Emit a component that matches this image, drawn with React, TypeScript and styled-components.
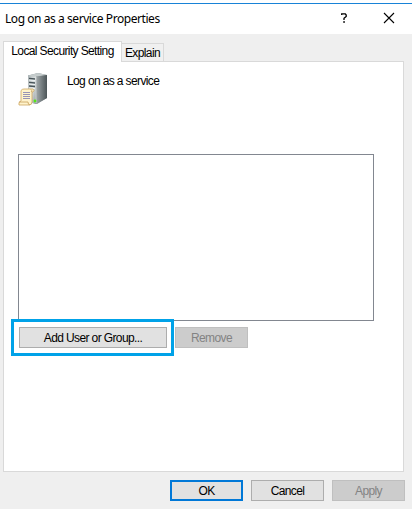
import React from "react";
import styled, { createGlobalStyle } from "styled-components";

const GlobalStyle = createGlobalStyle`
  * { box-sizing: border-box; }
  body { margin: 0; background: #fff; overflow: hidden; }
`;

const Dialog = styled.div`
  width: 412px;
  height: 509px;
  padding-top: 3px;
  display: flex;
  flex-direction: column;
  background: #fff;
  color: #000;
  font: 12px/14px "Liberation Sans", Arial, sans-serif;
  letter-spacing: -0.62px;
`;

const TitleBar = styled.header`
  height: 31px;
  flex: none;
  display: flex;
  align-items: center;
  border-top: 1px solid #1883d7;
  padding: 0 17px 0 5px;
  background: #fff;
`;

const Title = styled.h1`
  margin: 0;
  flex: 1;
  font: 400 12px/16px "Noto Sans", "Segoe UI", sans-serif;
  letter-spacing: -0.44px;
  white-space: nowrap;
`;

const CaptionButton = styled.button<{ $gap?: number }>`
  display: flex;
  padding: 0;
  border: 0;
  background: none;
  margin-top: -2px;
  margin-right: ${(p) => p.$gap ?? 0}px;
  color: #000;
`;

const Body = styled.main`
  flex: 1;
  display: flex;
  flex-direction: column;
  background: #efefef;
  padding: 7px 8px 0 3px;
`;

const Tabs = styled.nav`
  display: flex;
  align-items: flex-end;
  height: 20px;
  flex: none;
`;

const Tab = styled.button<{ $active?: boolean }>`
  width: ${(p) => (p.$active ? 119 : 42)}px;
  height: ${(p) => (p.$active ? 21 : 18)}px;
  margin-bottom: ${(p) => (p.$active ? -1 : 0)}px;
  padding: ${(p) => (p.$active ? "0 0 2px" : "1px 0 0")};
  border: 1px solid #d9d9d9;
  border-left-width: ${(p) => (p.$active ? 1 : 0)}px;
  border-bottom: 0;
  background: ${(p) => (p.$active ? "#fff" : "#f0f0f0")};
  color: #000;
  font: inherit;
  letter-spacing: inherit;
  white-space: nowrap;
  z-index: 1;
`;

const Panel = styled.section`
  width: 401px;
  height: 411px;
  border: 1px solid #d9d9d9;
  background: #fff;
  padding: 11px 7px 0;
`;

const PolicyHeader = styled.div`
  display: flex;
  height: 81px;
  padding-left: 7px;
  gap: 19px;
`;

const PolicyName = styled.span`
  padding-top: 1px;
  white-space: nowrap;
`;

const MemberList = styled.div`
  width: 356px;
  height: 167px;
  margin-left: 7px;
  border: 1px solid #828790;
  background: #fff;
`;

const MemberActions = styled.div`
  display: flex;
  align-items: center;
  margin-top: -2px;
`;

const Highlight = styled.div`
  width: 163px;
  height: 37px;
  margin-right: 1px;
  border: 3px solid #00a2e8;
  padding: 5px;
  background: #fff;
`;

const Button = styled.button<{ $width?: number; $primary?: boolean }>`
  width: ${(p) => p.$width ?? 73}px;
  height: 21px;
  display: flex;
  align-items: center;
  justify-content: center;
  padding: 0;
  border: ${(p) => (p.$primary ? "2px solid #0078d7" : "1px solid #adadad")};
  background: #e1e1e1;
  color: #000;
  font: inherit;
  letter-spacing: inherit;
  white-space: nowrap;
  &:disabled {
    border-color: #bfbfbf;
    background: #ccc;
    color: #838383;
  }
`;

const Footer = styled.footer`
  display: flex;
  justify-content: flex-end;
  gap: 8px;
  padding-top: 8px;
  margin-right: -1px;
`;

const ServerIcon = () => (
  <svg width="30" height="33" viewBox="0 0 30 33" aria-hidden="true">
    <defs>
      <linearGradient id="front" x2="1" y2="1">
        <stop stopColor="#a9b2b4" />
        <stop offset=".5" stopColor="#dde1e1" />
        <stop offset="1" stopColor="#929a9c" />
      </linearGradient>
      <linearGradient id="side" x2="1" y2="0">
        <stop stopColor="#a2a9ab" />
        <stop offset="1" stopColor="#4c5558" />
      </linearGradient>
    </defs>
    <path d="M10 2.5 20 0 29 2 29 25 19 31 10 29Z" fill="#899295" />
    <path d="M10 2.5 20 0 29 2 18 4Z" fill="#c5cccc" />
    <path d="M10 2.5 18 3.5V31L10 29Z" fill="url(#front)" />
    <path d="M18 3.5 29 2V25L18 31Z" fill="url(#side)" />
    <path d="M11 5.5 17 6M11 9.5 17 10M11 13 17 13.5" stroke="#485459" strokeWidth="1.4" />
    <path d="M11 7 17 7.5M11 11 17 11.5M11 15 17 15.5" stroke="#f0f4f4" />
    <path d="M18 4V30" stroke="#d8dddd" strokeWidth=".7" />
    <circle cx="17" cy="28" r="1.4" fill="#54e616" />
    <path d="M3 17.5Q4 16 6 16H15Q17 17 15 19H14V29Q14 32 11 32H1Q0 29 3 28H3Z" fill="#fff3cc" stroke="#cda55e" strokeWidth=".8" />
    <path d="M1 29H10Q10 32 12 32M13 16.5Q15 18 13 19" fill="none" stroke="#c7a05a" strokeWidth=".8" />
    <path d="M5 19.5H12M5 21.5H12M5 23.5H12M5 25.5H12" stroke="#8c89b3" strokeWidth=".9" />
  </svg>
);

export default function App() {
  return (
    <>
      <GlobalStyle />
      <Dialog>
        <TitleBar>
          <Title>Log on as a service Properties</Title>
          <CaptionButton $gap={36} aria-label="Help">
            <svg width="6" height="10" viewBox="0 0 6 10">
              <path d="M.7 2V.8H4.3L5.2 2V3.4L3 5.3V7" fill="none" stroke="#000" strokeWidth="1.3" />
              <path d="M2.2 8.2H3.9V9.8H2.2Z" />
            </svg>
          </CaptionButton>
          <CaptionButton aria-label="Close">
            <svg width="12" height="12" viewBox="0 0 12 12">
              <path d="M1 1 11 11M11 1 1 11" stroke="#000" strokeWidth="1.1" />
            </svg>
          </CaptionButton>
        </TitleBar>
        <Body>
          <Tabs>
            <Tab $active>Local Security Setting</Tab>
            <Tab>Explain</Tab>
          </Tabs>
          <Panel>
            <PolicyHeader>
              <ServerIcon />
              <PolicyName>Log on as a service</PolicyName>
            </PolicyHeader>
            <MemberList />
            <MemberActions>
              <Highlight>
                <Button $width={148}>Add User or Group...</Button>
              </Highlight>
              <Button disabled>Remove</Button>
            </MemberActions>
          </Panel>
          <Footer>
            <Button $primary>OK</Button>
            <Button>Cancel</Button>
            <Button disabled>Apply</Button>
          </Footer>
        </Body>
      </Dialog>
    </>
  );
}
